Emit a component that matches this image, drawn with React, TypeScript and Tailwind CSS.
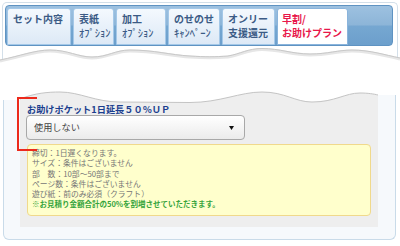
import React from 'react';

const tabs = [
  { w: 'w-[64px]', l1: 'セット内容', l2: '', half: false },
  { w: 'w-[41px]', l1: '表紙', l2: 'ｵﾌﾟｼｮﾝ', half: true },
  { w: 'w-[50px]', l1: '加工', l2: 'ｵﾌﾟｼｮﾝ', half: true },
  { w: 'w-[52px]', l1: 'のせのせ', l2: 'ｷｬﾝﾍﾟｰﾝ', half: true },
  { w: 'w-[53px]', l1: 'オンリー', l2: '支援還元', half: false },
];

const notes = [
  '締切：1日遅くなります。',
  'サイズ：条件はございません',
  '部　数：10部～50部まで',
  'ページ数：条件はございません',
  '遊び紙：前のみ必須（クラフト）',
];

export default function App() {
  return (
    <div className="w-[400px] h-[246px] bg-white overflow-hidden font-['Noto_Sans_CJK_JP',sans-serif]">
      {/* Top tab panel */}
      <div className="ml-[2px] mt-[2px] w-[396px] rounded-t-[5px] border-x border-t border-[#d3dfe9] px-[2px] pt-[2px] pb-[2px]">
        <div className="flex w-[388px] h-[41px] gap-[2px] rounded-[4px] border border-[#5f93c2] bg-[linear-gradient(#9dc1e0_0%,#8db5d8_48%,#76a7d1_52%,#6c9fcc_100%)] pl-[1px] pt-[2px]">
          {tabs.map((t) => (
            <div
              key={t.l1}
              className={`${t.w} h-[37px] whitespace-nowrap rounded-t-[3px] border border-[#a4c8e8] bg-[linear-gradient(#f4f9fe,#dde9f6)] px-[5px] pt-[3px] text-[10px] font-bold leading-[14px] text-[#3b5b85]`}
            >
              <div>{t.l1}</div>
              {t.l2 && (
                <div className={t.half ? 'text-[10.5px] font-medium' : ''}>{t.l2}</div>
              )}
            </div>
          ))}
          <div className="w-[71px] h-[37px] whitespace-nowrap rounded-t-[3px] border border-[#8ab4dc] bg-white px-[4px] pt-[3px] text-[10px] font-bold leading-[14px] text-[#e8174a]">
            <div>早割/</div>
            <div>お助けプラン</div>
          </div>
        </div>
      </div>

      {/* Torn edge */}
      <svg width="400" height="16" className="block">
        <line x1="2.5" y1="0" x2="2.5" y2="12" stroke="#d3dfe9" />
        <line x1="397.5" y1="0" x2="397.5" y2="10" stroke="#d3dfe9" />
        <path
          d="M0,12 C20,8 35,2 50,2 C68,2 78,9 92,9 C108,9 115,2 130,2 C155,2 170,7 190,8 C205,9 215,9 228,8 C240,6 248,0.5 262,0.5 C280,0.5 292,6 310,6 C328,6 338,2 352,2 C370,2 385,7 400,10"
          fill="none"
          stroke="#e6e6e6"
          strokeWidth="3"
          transform="translate(0,1)"
        />
        <path
          d="M0,12 C20,8 35,2 50,2 C68,2 78,9 92,9 C108,9 115,2 130,2 C155,2 170,7 190,8 C205,9 215,9 228,8 C240,6 248,0.5 262,0.5 C280,0.5 292,6 310,6 C328,6 338,2 352,2 C370,2 385,7 400,10"
          fill="none"
          stroke="#c8c8c8"
          strokeWidth="1"
        />
      </svg>

      {/* Option panel */}
      <div className="relative mt-[27px]">
        <svg width="400" height="12" className="block">
          <rect x="4" y="9" width="16" height="3" fill="#f6f9fc" />
          <line x1="3.5" y1="9" x2="3.5" y2="12" stroke="#c9dbe9" />
          <rect x="378" y="4" width="17" height="8" fill="#f6f9fc" />
          <line x1="395.5" y1="4" x2="395.5" y2="12" stroke="#c9dbe9" />
          <path
            d="M20,8 C35,2 48,1 60,1 C80,1 95,11 120,11 L190,11.5 C220,11.5 240,1 262,1 C285,1 295,11 312,11 C335,11 345,2 360,2 C368,2 374,3 378,4 L378,12 L20,12 Z"
            fill="#eeeeee"
          />
          <path
            d="M20,8 C35,2 48,1 60,1 C80,1 95,11 120,11 L190,11.5 C220,11.5 240,1 262,1 C285,1 295,11 312,11 C335,11 345,2 360,2 C368,2 374,3 378,4"
            fill="none"
            stroke="#c4c4c4"
          />
        </svg>
        <div className="ml-[3px] w-[393px] rounded-b-[6px] border-x border-b border-[#c9dbe9] bg-[#f6f9fc] px-[16px] pb-[12px]">
          <div className="w-[358px] h-[124px] bg-[#eeeeee] pl-[7px] pt-[1px]">
            <div className="text-[9.2px] font-bold leading-[11px] text-[#1b3f8f]">
              お助けポケット1日延長５０％ＵＰ
            </div>
            <div className="-ml-[1px] flex w-[219px] h-[25px] items-center justify-between rounded-[4px] border border-[#a8a8a8] bg-[linear-gradient(#ffffff,#ebebeb)] pl-[7px] pr-[10px] text-[9.2px] text-[#444]">
              <span>使用しない</span>
              <svg width="5" height="4" viewBox="0 0 5 4">
                <path d="M0,0 L5,0 L2.5,4 Z" fill="#111" />
              </svg>
            </div>
            <div className="mt-[4px] w-[344px] h-[72px] rounded-[4px] border border-[#f0d98c] bg-[#ffffcc] pl-[4px] pt-[3px] text-[7.8px] leading-[10.3px] text-[#777]">
              {notes.map((n) => (
                <div key={n}>{n}</div>
              ))}
              <div className="text-[7.5px] font-bold text-[#36a43c]">
                ※お見積り金額合計の50%を割増させていただきます。
              </div>
            </div>
          </div>
        </div>
        <div className="absolute left-[17px] top-[6px] w-[20px] h-[54px] border-y-2 border-l-2 border-[#ec2a1c]" />
      </div>
    </div>
  );
}
